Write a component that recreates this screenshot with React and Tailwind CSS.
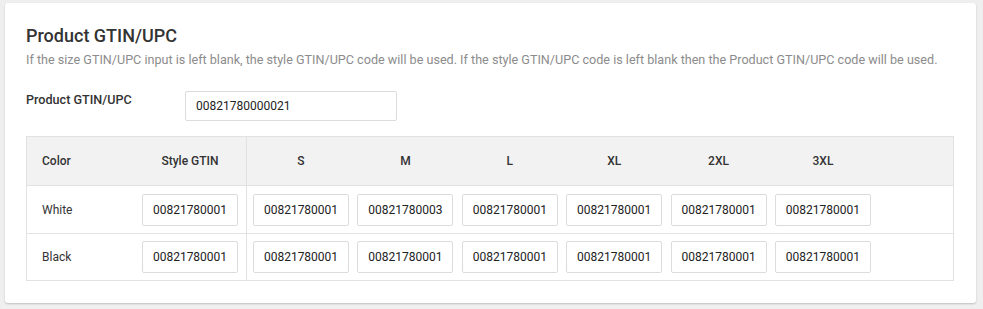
import React from "react";

export default function App() {
  const sizes = ["S", "M", "L", "XL", "2XL", "3XL"];
  const rows = [
    {
      color: "White",
      style: "00821780001",
      codes: ["00821780001", "00821780003", "00821780001", "00821780001", "00821780001", "00821780001"],
    },
    {
      color: "Black",
      style: "00821780001",
      codes: ["00821780001", "00821780001", "00821780001", "00821780001", "00821780001", "00821780001"],
    },
  ];

  const cols = "grid grid-cols-[108px_112px_repeat(6,104.4px)_1fr]";
  const box =
    "w-[96px] h-[32px] border border-[#dcdcdc] rounded-[2px] bg-white text-[12px] text-[#222] flex items-center justify-center";

  return (
    <div
      className="w-[983px] h-[309px] bg-[#efefef] pt-[3px] pl-[5px] pr-[7px]"
      style={{ fontFamily: "Roboto, 'Liberation Sans', sans-serif" }}
    >
      <div className="bg-white rounded-[3px] shadow-[0_1px_2px_rgba(0,0,0,0.2)] pt-[22px] pl-[21px] pr-[22px] pb-[22px]">
        {/* Header */}
        <h2 className="text-[18px] leading-[22px] font-medium text-[#333]">Product GTIN/UPC</h2>
        <p className="mt-[6px] text-[12.6px] leading-[14px] text-[#8c8c8c]">
          If the size GTIN/UPC input is left blank, the style GTIN/UPC code will be used. If the style GTIN/UPC code is left blank then the Product GTIN/UPC code will be used.
        </p>

        {/* Product field */}
        <div className="flex items-start mt-[24px]">
          <label className="w-[159px] pt-[2px] text-[12.6px] leading-[14px] font-medium text-[#333]">
            Product GTIN/UPC
          </label>
          <div className="w-[212px] h-[30px] border border-[#dcdcdc] rounded-[2px] px-[10px] flex items-center text-[12px] text-[#222]">
            00821780000021
          </div>
        </div>

        {/* Table */}
        <div className="mt-[15px] border border-[#e2e2e2] text-[12px] text-[#333]">
          <div className={`${cols} h-[48px] bg-[#f2f2f2] font-medium items-center`}>
            <div className="pl-[15px]">Color</div>
            <div className="h-full border-r border-[#e2e2e2] flex items-center justify-end pr-[8px]">
              <span className="w-[96px] text-center">Style GTIN</span>
            </div>
            {sizes.map((s) => (
              <div key={s} className="pl-[6px]">
                <div className="w-[96px] text-center">{s}</div>
              </div>
            ))}
            <div />
          </div>
          {rows.map((r, idx) => (
            <div
              key={r.color}
              className={`${cols} ${idx === 0 ? "h-[48px]" : "h-[47px]"} border-t border-[#e2e2e2] items-center`}
            >
              <div className="pl-[15px] text-[#333]">{r.color}</div>
              <div className="h-full border-r border-[#e2e2e2] flex items-center justify-end pr-[8px]">
                <div className={box}>{r.style}</div>
              </div>
              {r.codes.map((c, i) => (
                <div key={i} className="pl-[6px]">
                  <div className={box}>{c}</div>
                </div>
              ))}
              <div />
            </div>
          ))}
        </div>
      </div>
    </div>
  );
}
